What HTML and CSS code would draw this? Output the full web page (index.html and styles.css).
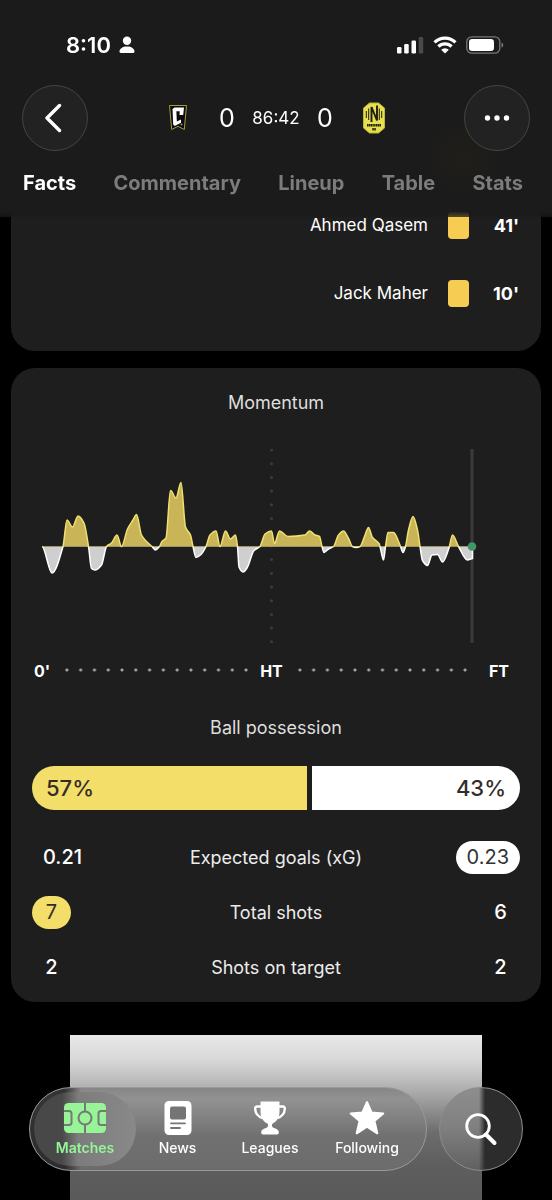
FILE: index.html
```
<!DOCTYPE html>
<html lang="en">
<head>
  <meta charset="utf-8">
  <meta name="viewport" content="width=device-width, initial-scale=1">
  <title>Match Facts</title>
  <link rel="stylesheet" href="styles.css">
</head>
<body>
  <header class="header">
    <div class="status-bar">
      <span class="clock">8:10</span>
      <svg class="person" width="16" height="18" viewBox="0 0 16 18" fill="#fff">
        <circle cx="8" cy="4.8" r="4.2"/>
        <path d="M0.5 15.6C0.5 12.4 3.6 10.4 8 10.4s7.500 2 7.500 5.200c0 1-.5 1.400-1.400 1.400H1.900c-.9 0-1.400-.4-1.400-1.400z"/>
      </svg>
      <svg class="signal" width="28" height="18" viewBox="0 0 28 18" fill="#fff">
        <rect x="1" y="11" width="4.500" height="6.500" rx="1.300"/>
        <rect x="8.200" y="8" width="4.500" height="9.500" rx="1.300"/>
        <rect x="15.500" y="4.500" width="4.500" height="13" rx="1.300"/>
        <rect x="22.700" y="1" width="4.500" height="16.500" rx="1.300" fill="#4a4a4a"/>
      </svg>
      <svg class="wifi" width="24" height="18" viewBox="0 0 24 18" fill="none" stroke="#fff" stroke-width="3.200">
        <path d="M1.500 6.400a15 15 0 0 1 21 0"/>
        <path d="M5.400 10.500a9.400 9.400 0 0 1 13.200 0"/>
        <path d="M12 17.600l-3.800-3.900a5.400 5.400 0 0 1 7.600 0z" fill="#fff" stroke="none"/>
      </svg>
      <svg class="battery" width="38" height="18" viewBox="0 0 38 18">
        <rect x="0.800" y="0.800" width="33" height="16.400" rx="5" fill="none" stroke="#777" stroke-width="1.300"/>
        <rect x="3" y="3" width="25" height="12" rx="3.200" fill="#fff"/>
        <path d="M35.500 6.400c2.300.8 2.300 4.400 0 5.200z" fill="#777"/>
      </svg>
    </div>

    <div class="title-bar">
      <button class="round-btn" type="button" aria-label="Back">
        <svg width="20" height="30" viewBox="0 0 20 30" fill="none" stroke="#fff" stroke-width="3.400" stroke-linecap="round" stroke-linejoin="round">
          <path d="M14.500 2.500L2 15l12.500 12.500"/>
        </svg>
      </button>
      <div class="score">
        <svg width="20" height="28" viewBox="0 0 20 28">
          <path d="M1.500 1.500h17l-2.200 24-6.300-3.200-6.300 3.200z" fill="#0c0c0c" stroke="#a89c3a" stroke-width="1"/>
          <path d="M4.500 5l2-1.500h9.500l-.8 7.500h-3.700l.2-3.700H8.400l.4 10.200 4.200-2v3.200l-6.300 3.300-1.500-1.600z" fill="#fff"/>
          <circle cx="13.500" cy="20.500" r="1" fill="#999"/>
        </svg>
        <span class="goals">0</span>
        <span class="minute">86:42</span>
        <span class="goals">0</span>
        <svg width="24" height="32" viewBox="0 0 24 32">
          <path d="M7.500 1h9L22.500 6v20l-6 5h-9l-6-5V6z" fill="#e6df4e" stroke="#bdb63e"/>
          <g stroke="#1d1d14" fill="none" stroke-width="1">
            <path d="M4.300 9v7M6.700 6.500v11.500M17.300 6.500v11.500M19.700 9v7"/>
            <path d="M9.500 20V5l5.500 13.500V3.500" stroke-width="1.900"/>
            <path d="M5 23.300h14" stroke-width="2.600" stroke-dasharray="1.400 .4"/>
            <path d="M10.300 27.200h3.600" stroke-width="2.400" stroke-dasharray="1.500 .5"/>
          </g>
        </svg>
      </div>
      <button class="round-btn" type="button" aria-label="More">
        <svg width="28" height="8" viewBox="0 0 28 8" fill="#fff">
          <circle cx="4.500" cy="4" r="2.700"/>
          <circle cx="14" cy="4" r="2.700"/>
          <circle cx="23.500" cy="4" r="2.700"/>
        </svg>
      </button>
    </div>

    <nav class="tabs">
      <a href="#facts" class="active">Facts</a>
      <a href="#commentary">Commentary</a>
      <a href="#lineup">Lineup</a>
      <a href="#table">Table</a>
      <a href="#stats">Stats</a>
    </nav>
  </header>

  <main>
    <section class="card events">
      <div class="event">
        <span>Ahmed Qasem</span>
        <span class="yellow-card"></span>
        <span class="event-time">41'</span>
      </div>
      <div class="event">
        <span>Jack Maher</span>
        <span class="yellow-card"></span>
        <span class="event-time">10'</span>
      </div>
    </section>

    <section class="card stats">
      <h2>Momentum</h2>
      <svg class="momentum" viewBox="0 0 488 194">
        <clipPath id="above"><rect x="0" y="0" width="488" height="98"/></clipPath>
        <clipPath id="below"><rect x="0" y="97" width="488" height="97"/></clipPath>
        <line class="half-line" x1="239.500" y1="1" x2="239.500" y2="194"/>
        <line class="now-line" x1="440" y1="0" x2="440" y2="194"/>
        <path class="away" clip-path="url(#below)"/>
        <path class="home" clip-path="url(#above)"/>
        <circle cx="440" cy="97.500" r="4.300" fill="#3f9864"/>
      </svg>
      <div class="axis">
        <span>0'</span>
        <i class="dots first"></i>
        <span>HT</span>
        <i class="dots second"></i>
        <span>FT</span>
      </div>

      <h2 class="possession-title">Ball possession</h2>
      <div class="possession">
        <div class="home-share" style="width: 57%">57%</div>
        <div class="away-share" style="width: 43%">43%</div>
      </div>

      <table>
        <tr>
          <td><span class="value">0.21</span></td>
          <th scope="row">Expected goals (xG)</th>
          <td><span class="value best-away">0.23</span></td>
        </tr>
        <tr>
          <td><span class="value best-home">7</span></td>
          <th scope="row">Total shots</th>
          <td><span class="value">6</span></td>
        </tr>
        <tr>
          <td><span class="value">2</span></td>
          <th scope="row">Shots on target</th>
          <td><span class="value">2</span></td>
        </tr>
      </table>
    </section>

    <div class="banner"></div>
  </main>

  <div class="bottom-bar">
    <nav class="bottom-nav">
      <a href="#matches" class="active">
        <svg width="42" height="30" viewBox="0 0 42 30">
          <rect width="42" height="30" rx="4.500" fill="#97f598"/>
          <g fill="none" stroke="#787878" stroke-width="2">
            <path d="M21 0v8.500M21 21.500V30M0 8h5q2.500 0 2.500 2.500v9Q7.500 22 5 22H0M42 8h-5q-2.500 0-2.500 2.500v9q0 2.500 2.500 2.500h5"/>
            <circle cx="21" cy="15" r="6.500"/>
          </g>
        </svg>
        Matches
      </a>
      <a href="#news">
        <svg width="28" height="34" viewBox="0 0 28 34">
          <rect x="0.500" width="27" height="34" rx="4.500" fill="#fff"/>
          <rect x="6" y="5.500" width="16" height="13" rx="2" fill="#757575"/>
          <path d="M7 22.300h14M7 27h9" stroke="#757575" stroke-width="1.800" stroke-linecap="round"/>
        </svg>
        News
      </a>
      <a href="#leagues">
        <svg width="34" height="34" viewBox="0 0 34 34" fill="#fff">
          <path d="M7.500 0.500h19v10c0 6-2.500 9.500-6 11.500-1.800 1-2 2.500-1 4 .6.800 2 1.200 3.500 1.700 2 .7 2.800 2 2.800 3.800 0 1.300-.6 2-1.800 2H10c-1.200 0-1.800-.7-1.800-2 0-1.800.8-3.100 2.800-3.800 1.500-.5 2.900-.9 3.500-1.700 1-1.500.8-3-1-4-3.500-2-6-5.500-6-11.500z"/>
          <path d="M8 5.500H4.300Q2 5.500 2.200 8c.3 4.500 2.500 7.500 7.300 9M26 5.500h3.700Q32 5.500 31.800 8c-.3 4.500-2.500 7.500-7.300 9" fill="none" stroke="#fff" stroke-width="2.400"/>
        </svg>
        Leagues
      </a>
      <a href="#following">
        <svg width="36" height="34" viewBox="0 0 34 34" preserveAspectRatio="xMidYMid slice">
          <path d="M17 2l4.300 9.800 11 .9-8.300 7.200 2.700 11.500L17 25.200l-9.700 6.200L10 19.900 1.700 12.700l11-.9z" fill="#fff" stroke="#fff" stroke-width="2" stroke-linejoin="round"/>
        </svg>
        Following
      </a>
    </nav>
    <button class="search" type="button" aria-label="Search">
      <svg width="34" height="34" viewBox="0 0 34 34" fill="none" stroke="#fff">
        <circle cx="14" cy="14" r="11.300" stroke-width="2.800"/>
        <path d="M22 22.500l8.500 8.500" stroke-width="4" stroke-linecap="round"/>
      </svg>
    </button>
  </div>

  <script src="script.js"></script>
</body>
</html>
```

FILE: styles.css
```
* {
  box-sizing: border-box;
}

body {
  margin: 0;
  background: #000;
  color: #fff;
  font-family: Inter, "Liberation Sans", sans-serif;
  font-size: 18px;
}

a {
  color: inherit;
  text-decoration: none;
}

button {
  border: none;
  padding: 0;
  cursor: pointer;
}

svg {
  display: block;
}

/* header */
.header {
  position: fixed;
  top: 0;
  left: 0;
  right: 0;
  z-index: 2;
  background:
    radial-gradient(circle at 84% 73%, rgba(60, 50, 10, 0.15), transparent 40px),
    linear-gradient(#1b1b1b 211px, rgba(27, 27, 27, 0.75));
}

.status-bar {
  display: flex;
  align-items: center;
  height: 30px;
  margin: 30px 48px 25px 66px;
}

.clock {
  font-size: 22px;
  font-weight: 600;
}

.person {
  margin-left: 8px;
}

.signal {
  margin-left: auto;
}

.wifi {
  margin: 0 9px;
}

.title-bar {
  display: flex;
  justify-content: space-between;
  align-items: center;
  padding: 0 22px;
}

.round-btn {
  display: flex;
  align-items: center;
  justify-content: center;
  width: 66px;
  height: 66px;
  border: 1px solid #444;
  border-radius: 50%;
  background: #222;
}

.score {
  display: grid;
  grid-template-columns: repeat(5, 49px);
  place-items: center;
}

.goals {
  font-size: 25px;
}

.minute {
  font-size: 17px;
}

.tabs {
  display: flex;
  justify-content: space-between;
  align-items: center;
  height: 66px;
  padding: 0 29px 2px 23px;
  color: #7c7c7c;
  font-size: 20px;
  font-weight: 700;
}

.tabs .active {
  color: #fff;
}

/* cards */
main {
  padding: 175px 11px 0;
}

.card {
  border-radius: 24px;
  background: #1e1e1e;
}

.events {
  padding: 16px 22px 24px;
}

.event {
  display: flex;
  justify-content: flex-end;
  align-items: center;
  height: 68px;
  font-size: 17px;
}

.yellow-card {
  width: 21px;
  height: 27px;
  margin-left: 20px;
  border-radius: 4px;
  background: #f6cd52;
}

.event-time {
  width: 50px;
  text-align: right;
  font-size: 18px;
  font-weight: 700;
}

.stats {
  margin-top: 17px;
  padding: 23px 21px 7px;
}

h2 {
  margin: 0;
  color: #dedede;
  font-size: 18px;
  font-weight: 400;
  line-height: 24px;
  text-align: center;
}

.momentum {
  width: 100%;
  margin-top: 34px;
}

.half-line {
  stroke: #3c3c3c;
  stroke-width: 3;
  stroke-linecap: round;
  stroke-dasharray: 0 13.700;
}

.now-line {
  stroke: #3b3b3b;
  stroke-width: 3;
}

.home {
  fill: #c9b458;
  stroke: #f0e070;
  stroke-width: 1.500;
}

.away {
  fill: #cfcfcf;
  stroke: #fff;
  stroke-width: 1.500;
}

.axis {
  display: flex;
  align-items: center;
  margin: 18px 11px 0 2px;
  font-size: 16px;
  font-weight: 700;
  line-height: 20px;
}

.dots {
  height: 4px;
  margin-bottom: 2px;
  background: radial-gradient(circle, #a5a5a5 1px, transparent 2px) 0 0 / 14px 4px;
  background-repeat: round no-repeat;
}

.first {
  flex: 14;
  margin-left: 10px;
  margin-right: 7px;
}

.second {
  flex: 13;
  margin-left: 10px;
  margin-right: 17px;
}

.possession-title {
  margin-top: 35px;
}

.possession {
  display: flex;
  gap: 5px;
  height: 44px;
  margin: 26px 0 20px;
  border-radius: 22px;
  overflow: hidden;
  color: #332d29;
  font-size: 22px;
  font-weight: 500;
  line-height: 44px;
}

.home-share,
.away-share {
  padding: 0 14px;
}

.home-share {
  background: #f3de69;
}

.away-share {
  background: #fff;
  text-align: right;
}

table {
  width: 100%;
  border-collapse: collapse;
}

td,
th {
  height: 55px;
  padding: 0;
}

th {
  font-weight: 400;
  color: #ececec;
}

td {
  width: 90px;
}

td:last-child {
  text-align: right;
}

.value {
  display: inline-block;
  min-width: 39px;
  padding: 0 11px;
  border-radius: 17px;
  font-size: 20px;
  font-weight: 500;
  line-height: 33px;
  text-align: center;
}

.best-home {
  background: #f3de69;
  color: #332d29;
  font-weight: 400;
}

.best-away {
  background: #fff;
  color: #333;
  font-weight: 400;
}

.banner {
  height: 165px;
  margin: 33px 59px 0;
  background: linear-gradient(#e8e8e8, #d8d8d8 25px, #b5b5b5 50px, #6c6c6c 98px, #5e5e5e 130px, #5a5a5a);
}

/* bottom bar */
.bottom-bar {
  position: fixed;
  bottom: 29px;
  left: 29px;
  right: 29px;
  display: flex;
  gap: 12px;
}

.bottom-nav {
  flex: 1;
  display: grid;
  grid-template-columns: 102fr 83fr 102fr 92fr;
  height: 84px;
  padding: 4px 13px 4px 4px;
  border: 1px solid #999;
  border-radius: 42px;
  background:
    linear-gradient(90deg, rgba(30, 30, 30, 0.8) 36px, transparent 52px),
    linear-gradient(#858585, #929292 12px, #707070 50px, #6c6c6c);
  background-origin: border-box;
  font-size: 14px;
  font-weight: 500;
}

.bottom-nav a {
  display: flex;
  flex-direction: column;
  align-items: center;
  justify-content: center;
  gap: 4px;
  border-radius: 37px;
  line-height: 18px;
}

.bottom-nav svg {
  height: 34px;
}

.bottom-nav .active {
  background: linear-gradient(90deg, #484848 28px, #7c7c7c 44px, #898989);
  color: #97f598;
  font-weight: 600;
}

.search {
  display: flex;
  align-items: center;
  justify-content: center;
  width: 84px;
  height: 84px;
  border: 1px solid #8c8c8c;
  border-radius: 50%;
  background:
    linear-gradient(90deg, transparent 40px, #2c2c2c 46px),
    linear-gradient(#8e8e8e, #808080 40px, #606060);
  background-origin: border-box;
}
```

FILE: script.js
```
// momentum samples, x = time, y = pressure (zero line is 97.5)
const points = [
  [10, 97.5], [20, 124], [31, 97.5], [35, 71], [40.5, 78], [46, 67], [52, 74], [56.5, 97.5],
  [59.5, 119.5], [63, 121], [69.5, 116], [74.5, 97.5], [79.5, 94], [85, 86], [89.5, 97.5],
  [95.5, 80], [101, 71], [104.5, 65.5], [109.5, 86], [114.5, 92.5], [120, 97.5], [123.5, 101],
  [127.5, 97.5], [130, 92.5], [134, 89], [138.5, 41.5], [144, 49], [149, 33.5], [153.5, 78],
  [158.5, 86], [161, 97.5], [164, 108.5], [169, 105.5], [174, 97.5], [178, 86], [184, 82],
  [188, 97.5], [193.5, 82], [198.5, 90], [203.5, 86], [205.5, 97.5], [207, 118], [211, 123],
  [215, 119], [222, 101.5], [228, 97.5], [233, 85], [239.5, 82], [242.5, 94.5], [247.5, 82],
  [256, 87.5], [273, 86], [277.5, 82], [283, 86], [287.5, 87.5], [290, 97.5], [292, 103.5],
  [296.5, 100], [301.5, 97.5], [306.5, 86], [311.5, 82], [316.5, 89.5], [320.5, 97.5],
  [324, 98.5], [328, 97.5], [332.5, 87.5], [336.5, 78.5], [340.5, 88.5], [347, 94.5],
  [348, 97.5], [351.5, 111], [353.5, 97.5], [356, 83.5], [361.5, 83.5], [368, 96], [371, 103.5],
  [373.5, 97.5], [376.5, 81], [381, 67.5], [385.5, 81], [388, 97.5], [390.5, 111.5],
  [395.5, 116.5], [400, 106], [405.5, 105.5], [410.5, 113], [417, 99], [420.5, 86],
  [426.5, 97.5], [435.5, 111], [440.5, 109.5]
];

// slope at a point, flat on peaks so the curve never overshoots
function slope(i) {
  if (i === 0 || i === points.length - 1) return 0;
  const [x0, y0] = points[i - 1];
  const [x1, y1] = points[i];
  const [x2, y2] = points[i + 1];
  const a = (y1 - y0) / (x1 - x0);
  const b = (y2 - y1) / (x2 - x1);
  return a * b <= 0 ? 0 : 2 * a * b / (a + b);
}

// left open so no stroke runs along the zero line
let d = `M${points[0][0]} ${points[0][1]}`;
for (let i = 1; i < points.length; i++) {
  const [x0, y0] = points[i - 1];
  const [x1, y1] = points[i];
  const h = (x1 - x0) / 3;
  d += `C${x0 + h} ${y0 + slope(i - 1) * h} ${x1 - h} ${y1 - slope(i) * h} ${x1} ${y1}`;
}
d += 'V97.5';

document.querySelector('.home').setAttribute('d', d);
document.querySelector('.away').setAttribute('d', d);
```
